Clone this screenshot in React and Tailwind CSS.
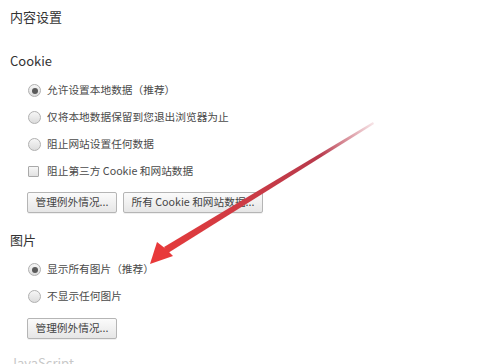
import React from "react";

const font = { fontFamily: '"Noto Sans CJK SC", "Noto Sans", sans-serif' };

const Radio = ({ checked, label }) => (
  <div className="flex items-center h-[27px] pl-[28px]">
    <span className="w-[13px] h-[13px] rounded-full border border-[#b0b0b0] bg-gradient-to-b from-[#f6f6f6] to-[#dcdcdc] flex items-center justify-center">
      {checked && <span className="w-[6px] h-[6px] rounded-full bg-[#5a5a5a]"></span>}
    </span>
    <span className="ml-[6px] text-[10.7px] text-[#4a4a4a]">{label}</span>
  </div>
);

const Check = ({ label }) => (
  <div className="flex items-center h-[27px] pl-[28px]">
    <span className="w-[11px] h-[11px] border border-[#a9a9a9] rounded-[1px] bg-gradient-to-b from-[#f7f7f7] to-[#e2e2e2]"></span>
    <span className="ml-[8px] text-[10.7px] text-[#4a4a4a]">{label}</span>
  </div>
);

const Btn = ({ children, w }) => (
  <button
    className={`h-[21px] ${w} border border-[#b5b5b5] rounded-[2px] bg-gradient-to-b from-[#fbfbfb] to-[#e6e6e6] text-[10.7px] text-[#444] shadow-[0_1px_0_rgba(0,0,0,0.06)] flex items-center justify-center`}
  >
    {children}
  </button>
);

const Arrow = () => (
  <svg className="absolute left-0 top-0 pointer-events-none" width="500" height="364">
    <defs>
      <linearGradient id="ag" x1="373" y1="123" x2="160" y2="255" gradientUnits="userSpaceOnUse">
        <stop offset="0" stopColor="#c2485a" stopOpacity="0.15" />
        <stop offset="0.25" stopColor="#b83a4c" />
        <stop offset="1" stopColor="#e53b3b" />
      </linearGradient>
    </defs>
    <polygon points="373,122 374,124 168,253 164,247" fill="url(#ag)" />
    <polygon points="150,264 157,242 166,249 173,256" fill="#e8393a" />
  </svg>
);

export default function App() {
  return (
    <div className="relative w-[500px] h-[364px] overflow-hidden bg-white" style={font}>
      <div className="pl-[10px] pt-[8px]">
        <div className="h-[18px] leading-[18px] text-[13px] text-[#333]">内容设置</div>
        <div className="mt-[26px] h-[18px] leading-[18px] text-[13px] text-[#333]">Cookie</div>
      </div>
      <div className="mt-[7px]">
        <Radio checked label="允许设置本地数据（推荐）" />
        <Radio label="仅将本地数据保留到您退出浏览器为止" />
        <Radio label="阻止网站设置任何数据" />
        <Check label="阻止第三方 Cookie 和网站数据" />
        <div className="flex gap-[6px] pl-[27px] mt-[7px]">
          <Btn w="w-[90px]">管理例外情况...</Btn>
          <Btn w="w-[140px]">所有 Cookie 和网站数据...</Btn>
        </div>
      </div>
      <div className="pl-[10px] mt-[18px] h-[18px] leading-[18px] text-[13px] text-[#333]">图片</div>
      <div className="mt-[7px]">
        <Radio checked label="显示所有图片（推荐）" />
        <Radio label="不显示任何图片" />
        <div className="flex pl-[27px] mt-[8px]">
          <Btn w="w-[90px]">管理例外情况...</Btn>
        </div>
      </div>
      <div className="pl-[10px] mt-[14px] text-[13px] text-[#c8c8c8]">JavaScript</div>
      <Arrow />
    </div>
  );
}
